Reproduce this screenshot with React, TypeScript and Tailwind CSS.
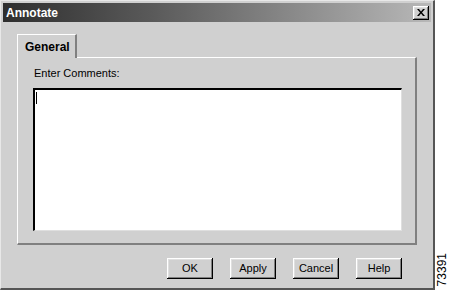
import type { ReactNode } from 'react'

const raised =
  'shadow-[inset_-1px_-1px_0_#000,inset_1px_1px_0_#fff,inset_-2px_-2px_0_#808080,inset_2px_2px_0_#dfdfdf]'

function Button({ children }: { children: ReactNode }) {
  return (
    <button
      className={`w-[46px] h-[21px] bg-[#d0d0d0] text-[11px] text-black flex items-center justify-center ${raised}`}
    >
      {children}
    </button>
  )
}

export default function App() {
  return (
    <div
      className="w-[449px] h-[291px] bg-white flex"
      style={{ fontFamily: '"Liberation Sans", Arial, sans-serif' }}
    >
      {/* Dialog window */}
      <div className="w-[435px] h-[290px] bg-[#d0d0d0] flex flex-col p-[2px] border-t border-l border-[#e8e8e8] border-r-2 border-r-[#555] border-b-2 border-b-[#555]">
        {/* Title bar */}
        <div className="h-[19px] shrink-0 flex items-center justify-between pl-[3px] pr-[2px] bg-[linear-gradient(to_right,#2e2e2e,#5a5a5a_35%,#b8b8b8)]">
          <span className="text-white font-bold text-[12px] leading-none">Annotate</span>
          <button
            className={`w-[16px] h-[14px] bg-[#d0d0d0] flex items-center justify-center ${raised}`}
          >
            <svg width="8" height="7" viewBox="0 0 8 7">
              <path d="M0 0h2l2 2.5L6 0h2L5 3.5 8 7H6L4 4.5 2 7H0l3-3.5z" fill="#000" />
            </svg>
          </button>
        </div>

        {/* Body */}
        <div className="flex-1 flex flex-col px-[14px] pt-[12px]">
          {/* Tab */}
          <div className="flex">
            <div className="h-[24px] w-[60px] flex items-center pl-[7px] border-t border-l border-white border-r-2 border-r-[#808080] bg-[#d0d0d0] relative -mb-px z-10 text-[12px] font-bold text-black">
              General
            </div>
          </div>
          {/* Panel */}
          <div className="h-[188px] border-t border-l border-white border-r-2 border-r-[#808080] border-b-2 border-b-[#808080] flex flex-col pl-[15px] pr-[13px] pt-[9px] pb-[12px]">
            <div className="text-[11px] leading-[13px] text-black pl-[1px]">Enter Comments:</div>
            <div className="mt-[8px] flex-1 border-t-2 border-l-2 border-t-black border-l-black border-r border-b border-r-[#dfdfdf] border-b-[#dfdfdf] bg-white relative">
              <div className="absolute left-[1px] top-[2px] w-px h-[12px] bg-black" />
            </div>
          </div>
          {/* Buttons */}
          <div className="flex justify-end gap-[17px] mt-[13px] pr-[15px]">
            <Button>OK</Button>
            <Button>Apply</Button>
            <Button>Cancel</Button>
            <Button>Help</Button>
          </div>
        </div>
      </div>

      {/* Figure number */}
      <div className="flex-1 flex flex-col justify-end items-center pb-[5px]">
        <span className="text-[12px] leading-none text-black [writing-mode:vertical-rl] rotate-180">
          73391
        </span>
      </div>
    </div>
  )
}
